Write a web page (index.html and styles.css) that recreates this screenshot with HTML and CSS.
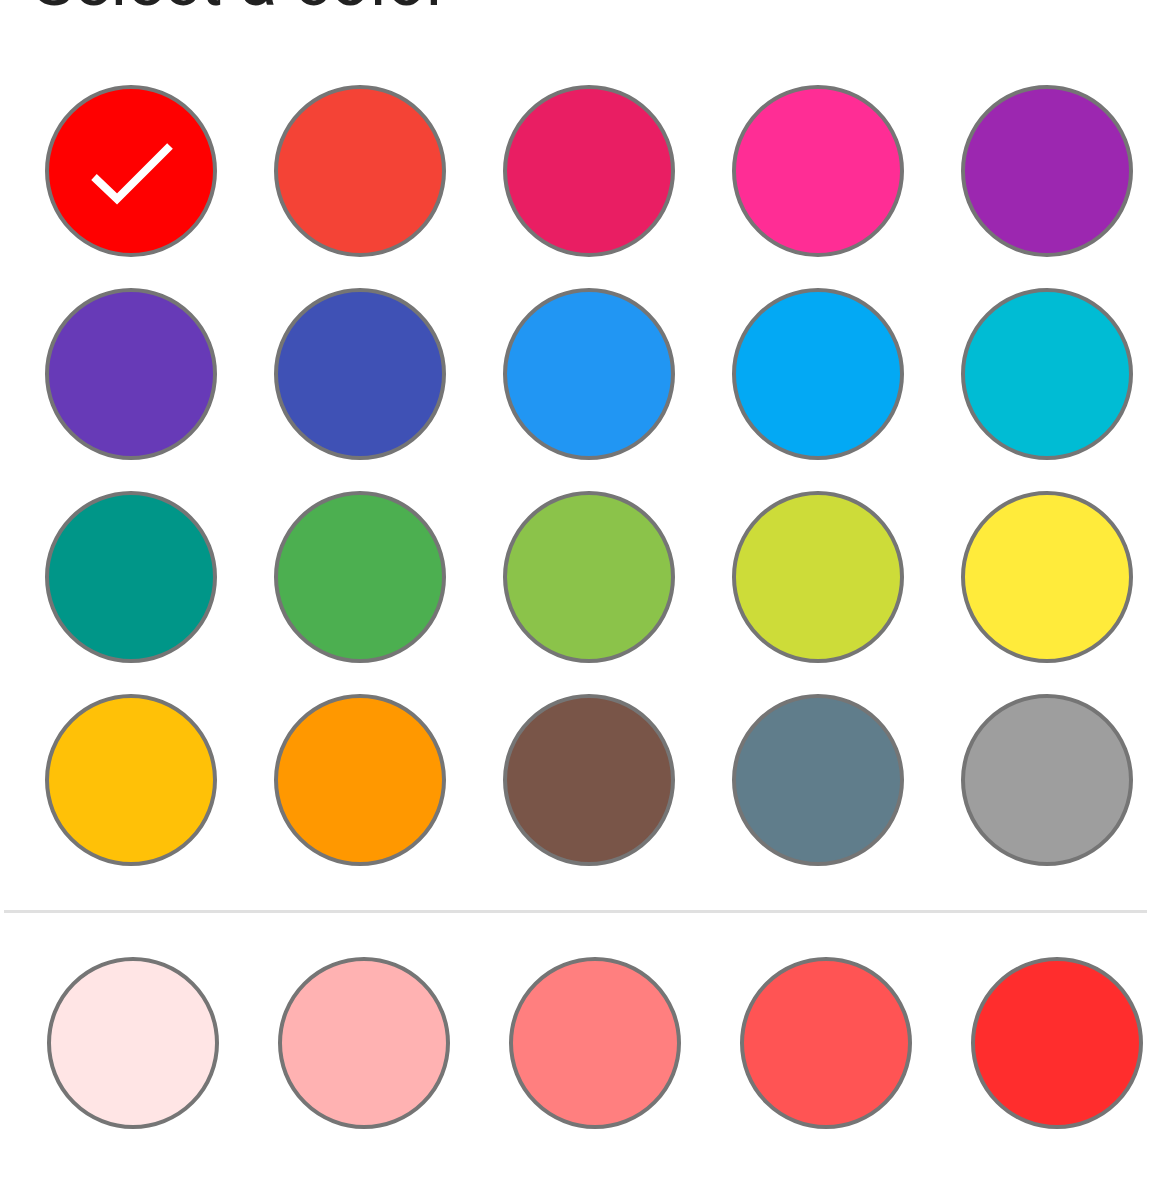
FILE: index.html
```html
<!DOCTYPE html>
<html>
<head>
<meta charset="utf-8">
<link rel="stylesheet" href="styles.css">
</head>
<body>
<h1 class="title">Select a color</h1>
<div class="palette">
  <div class="swatch selected" style="background:#FF0000">
    <svg class="check" viewBox="0 0 172 172" width="172" height="172"><polyline points="49,92 72,114 125,61" fill="none" stroke="#fff" stroke-width="8" stroke-linejoin="miter"/></svg>
  </div>
  <div class="swatch" style="background:#F44336"></div>
  <div class="swatch" style="background:#E91E63"></div>
  <div class="swatch" style="background:#FF2D95"></div>
  <div class="swatch" style="background:#9C27B0"></div>
  <div class="swatch" style="background:#673AB7"></div>
  <div class="swatch" style="background:#3F51B5"></div>
  <div class="swatch" style="background:#2196F3"></div>
  <div class="swatch" style="background:#03A9F4"></div>
  <div class="swatch" style="background:#00BCD4"></div>
  <div class="swatch" style="background:#009688"></div>
  <div class="swatch" style="background:#4CAF50"></div>
  <div class="swatch" style="background:#8BC34A"></div>
  <div class="swatch" style="background:#CDDC39"></div>
  <div class="swatch" style="background:#FFEB3B"></div>
  <div class="swatch" style="background:#FFC107"></div>
  <div class="swatch" style="background:#FF9800"></div>
  <div class="swatch" style="background:#795548"></div>
  <div class="swatch" style="background:#607D8B"></div>
  <div class="swatch" style="background:#9E9E9E"></div>
</div>
<div class="divider"></div>
<div class="shades">
  <div class="swatch" style="background:#FFE5E5"></div>
  <div class="swatch" style="background:#FFB2B2"></div>
  <div class="swatch" style="background:#FF7F7F"></div>
  <div class="swatch" style="background:#FF5454"></div>
  <div class="swatch" style="background:#FF2D2D"></div>
</div>
</body>
</html>
```
FILE: styles.css
```css
html, body {
  margin: 0;
  padding: 0;
  background: #ffffff;
}
body {
  font-family: Roboto, "Noto Sans", "Liberation Sans", sans-serif;
  width: 1152px;
  overflow: hidden;
}
.title {
  margin: -58px 0 0 0;
  padding-left: 33px;
  font-size: 69px;
  line-height: 80px;
  font-weight: 400;
  color: #212121;
  height: 80px;
}
.palette {
  margin-top: 63px;
  padding-left: 45px;
  display: grid;
  grid-template-columns: repeat(5, 172px);
  column-gap: 57px;
  row-gap: 31px;
}
.swatch {
  position: relative;
  width: 172px;
  height: 172px;
  box-sizing: border-box;
  border: 4px solid #757575;
  border-radius: 50%;
}
.check {
  position: absolute;
  left: -4px;
  top: -4px;
}
.divider {
  margin: 44px 0 0 4px;
  width: 1143px;
  height: 3px;
  background: #e0e0e0;
}
.shades {
  margin-top: 44px;
  padding-left: 47px;
  display: flex;
  gap: 59px;
}
```
